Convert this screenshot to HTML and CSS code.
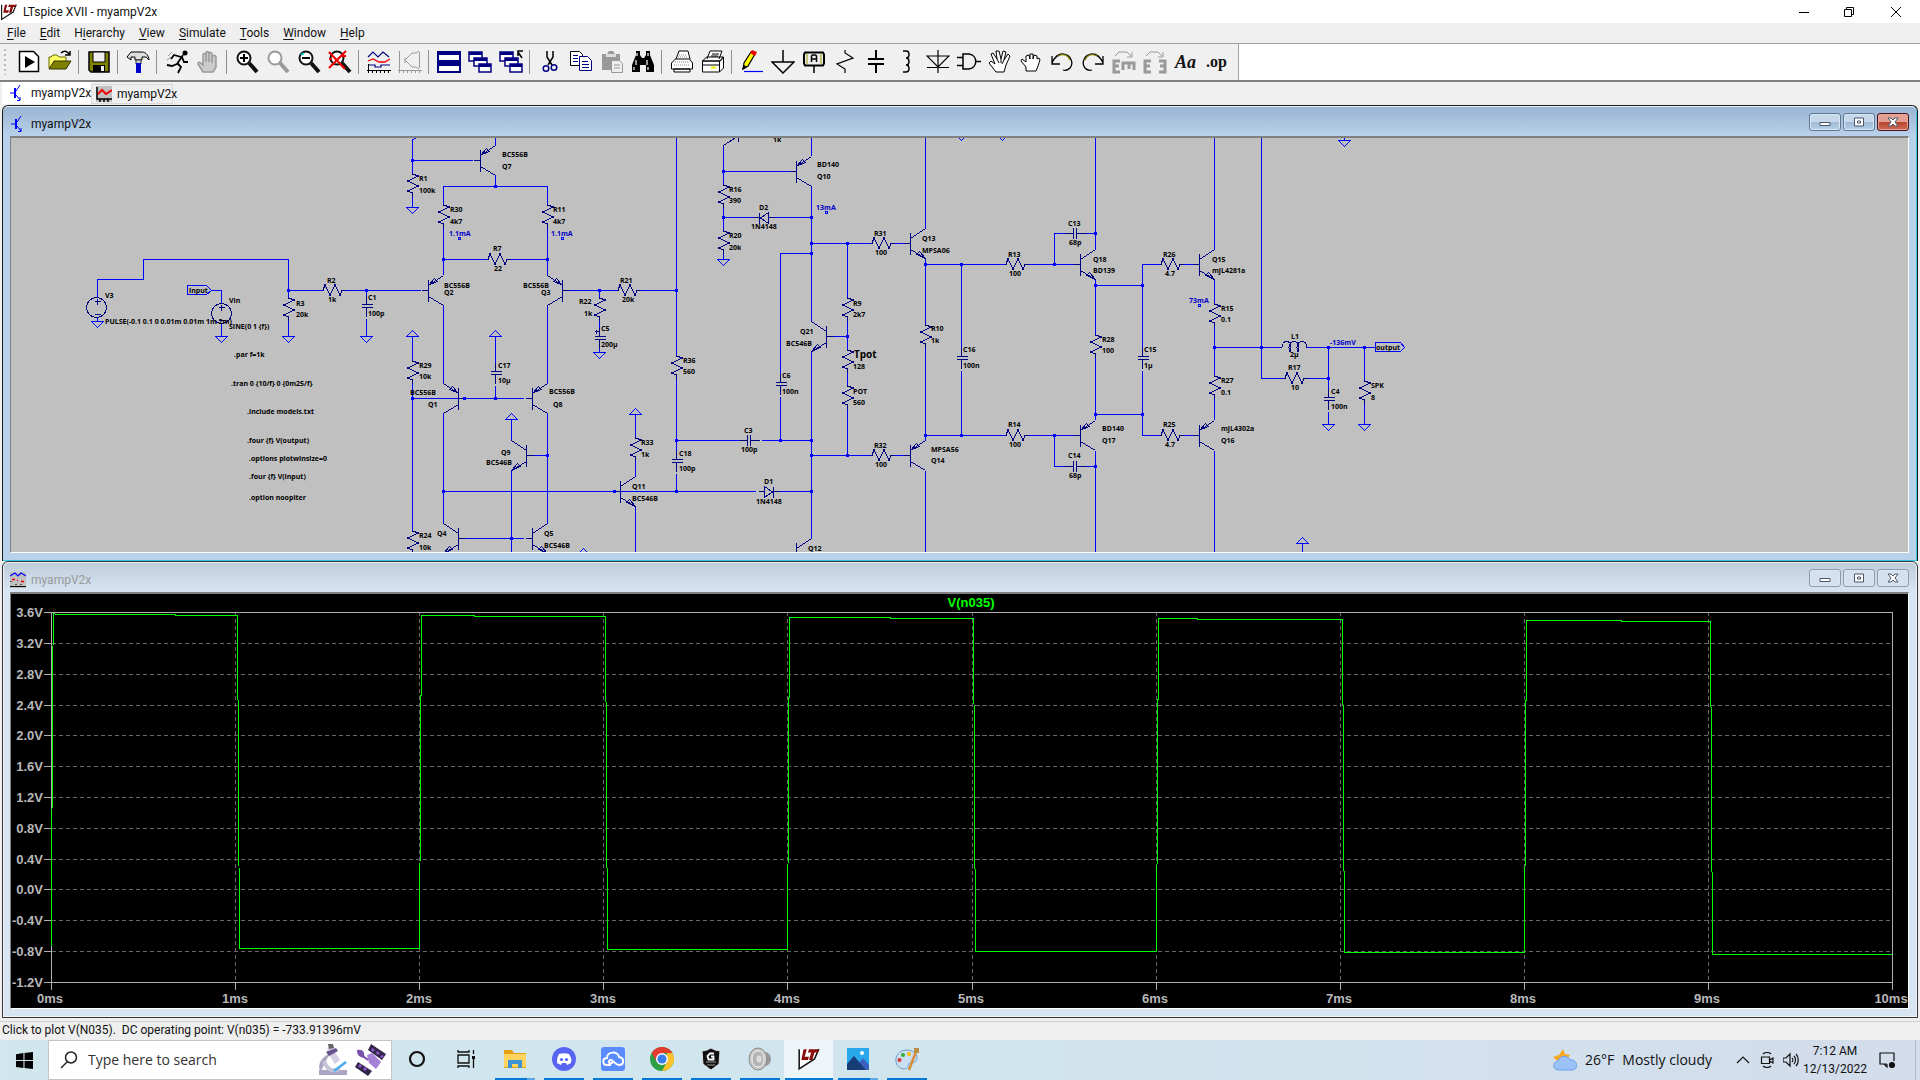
FILE: index.html
```html
<!DOCTYPE html>
<html lang="en">
<head>
<meta charset="utf-8">
<title>LTspice XVII - myampV2x</title>
<link rel="stylesheet" href="styles.css">
</head>
<body>
<svg class="defs" aria-hidden="true">
  <defs>
    <path id="res" class="part" d="M0 0v1l6 2l-11 5l11 5l-11 5l5 2v4"/>
    <path id="cap" class="part" d="M-5 0h11M-5 3h11M0 -9v9M0 3v9"/>
    <path id="dio" class="part" d="M-10 0h6M4 0h7M-4 -5v11l8 -5.500zM5 -5v11"/>
    <path id="pnp" class="part" d="M-7 0h7M0 -11v22M0 -5L15 -15M0 6L15 15M1 -6L6 -12L9 -9z"/>
    <path id="npn" class="part" d="M-7 0h7M0 -11v22M0 -5L15 -15M0 6L15 15M15 15L6 11L9 8z"/>
    <path id="gnd" class="wire" d="M-6 0h12l-6 6z"/>
    <path id="vcc" class="wire" d="M-6 0h12l-6 -6z"/>
    <path id="dot" class="dot" d="M-1.500 -1.500h3v3h-3z"/>
    <path id="probe" class="wire" d="M-1 -1h2v2h-2z"/>
    <g id="lt"><path d="M2 2v18l14-9L20 2" fill="#fff" stroke="#111" stroke-width="1.400"/><path d="M6 2h3L7 9h4l-1 3H4zM11 2h9l-1 3h-3l-2 7h-3l2-7h-3z" fill="#8b0a0a"/></g>
    <g id="tr" fill="none" stroke="#00f"><path d="M1 8h5M7 6l4-6M7 10l4 5M11 12v3.500H8"/><path d="M6 3v10" stroke-width="2"/></g>
    <g id="lens"><circle cx="9" cy="8" r="6.500" fill="#fff" stroke="currentColor" stroke-width="2"/><path d="M14 13l8 9" stroke="currentColor" stroke-width="4"/></g>
    <g id="casc" fill="#fff" stroke="#000080" stroke-width="1.500"><path d="M1 2h13v9H1z"/><path d="M1 3.500h13" stroke-width="3"/><path d="M6 8h13v8H6z"/><path d="M6 9.500h13" stroke-width="3"/><path d="M11 14h12v8H11z"/><path d="M11 15.500h12" stroke-width="3"/></g>
  </defs>
</svg>

<header class="titlebar">
  <svg class="app-icon" viewBox="0 0 22 22"><use href="#lt"/></svg>
  <h1 class="app-title">LTspice XVII - myampV2x</h1>
  <div class="caption-buttons">
    <button aria-label="Minimize"><svg viewBox="0 0 12 12"><path d="M1 6.500h10"/></svg></button>
    <button aria-label="Restore"><svg viewBox="0 0 12 12"><path d="M1.500 3.500h7v7h-7zM3.500 3.500v-2h7v7h-2"/></svg></button>
    <button aria-label="Close"><svg viewBox="0 0 12 12"><path d="M1 1l10 10M11 1L1 11"/></svg></button>
  </div>
</header>

<nav class="menubar">
  <button><u>F</u>ile</button><button><u>E</u>dit</button><button>H<u>i</u>erarchy</button><button><u>V</u>iew</button><button><u>S</u>imulate</button><button><u>T</u>ools</button><button><u>W</u>indow</button><button><u>H</u>elp</button>
</nav>

<div class="toolbar-row">
  <div class="toolbar">
    <button aria-label="New schematic"><svg viewBox="0 0 24 24"><path d="M2.500 1.500h14l5 5v15h-19z" fill="#fff" stroke="#000" stroke-width="1.500"/><path d="M8 6l10 6-10 6z"/></svg></button>
    <button aria-label="Open"><svg viewBox="0 0 24 24"><path d="M1 18V7h2l2-2h4l2 2h7v4" fill="#ffff66" stroke="#660"/><path d="M1 19L6 11h17l-5 8z" fill="#808000" stroke="#330"/><path d="M13 3c3-3 6-2 8 1m1-3v4h-5" fill="none" stroke="#000" stroke-width="1.500"/></svg></button>
    <span class="sep"></span>
    <button aria-label="Save"><svg viewBox="0 0 24 24"><path d="M2 2h20v20H4l-2-2z" fill="#808000" stroke="#000" stroke-width="1.500"/><path d="M6 2h12v10H6z" fill="#eee" stroke="#000"/><path d="M6 15h12v7H6z"/><path d="M14 16h3v5h-3z" fill="#eee"/></svg></button>
    <span class="sep"></span>
    <button aria-label="Control panel"><svg viewBox="0 0 24 24"><path d="M1 7l4-5h11c4 0 7 4 7 8l-3-3h-4v3H9V7H5v3z" fill="#ddd" stroke="#000"/><path d="M10 10h5v4h-5z" fill="#ccc" stroke="#333"/><path d="M10 13h5v10h-5z" fill="#00c"/></svg></button>
    <span class="sep"></span>
    <button aria-label="Run"><svg viewBox="0 0 24 24"><circle cx="20" cy="3" r="2.500"/><path d="M18 5l-6 9M16 7l-7-2-3 4M17 7l2 5h4M12 13l4 4-3 6M12 14l-5 2-5-1" fill="none" stroke="#000" stroke-width="1.800"/><path d="M3 6l4-4M2 10l4-3" stroke="#999"/></svg></button>
    <button aria-label="Halt"><svg viewBox="0 0 24 24"><path d="M7 22l-5-8c0-3 2-2 5 1V5c0-2 3-2 3 0V3c0-2 3-2 3 0v1c0-2 3-2 3 0v3c0-2 4-2 4 0v10l-3 5z" fill="#ccc" stroke="#999" stroke-width="1.500"/><path d="M10 5v7M13 4v8M16 7v6" stroke="#999" stroke-width="1.500"/></svg></button>
    <span class="sep"></span>
    <button aria-label="Zoom in"><svg viewBox="0 0 24 24"><use href="#lens"/><path d="M5 8h8M9 4v8" stroke="#000" stroke-width="2"/></svg></button>
    <button class="dim" aria-label="Pan"><svg viewBox="0 0 24 24"><use href="#lens"/></svg></button>
    <button aria-label="Zoom out"><svg viewBox="0 0 24 24"><use href="#lens"/><path d="M5 8h8" stroke="#000" stroke-width="2"/><path d="M4 5l3-2" stroke="#0cc" stroke-width="2"/></svg></button>
    <button aria-label="Zoom full extents"><svg viewBox="0 0 24 24"><use href="#lens"/><path d="M1 2l16 17M18 1L1 18M1 9h3M14 6h4" stroke="#e00" stroke-width="2.200"/></svg></button>
    <span class="sep"></span>
    <button aria-label="Autorange"><svg viewBox="0 0 24 24" fill="none"><path d="M1 7l5-5 5 5 5-5 6 5" stroke="#000080" stroke-width="1.200"/><path d="M1 11l5-2 6 3 6 0 5-3" stroke="#e00" stroke-width="1.300"/><path d="M1 15h7v2h6v-2h9" stroke="#000080" stroke-width="1.200"/><path d="M0 20.500h24M1.500 14v9M5.500 20v3M9.500 20v3M13.500 20v3M17.500 20v3M21.500 20v3" stroke="#000"/></svg></button>
    <button class="dim" aria-label="Toggle visibility"><svg viewBox="0 0 24 24" fill="none" stroke="#999"><path d="M1.500 1v22M0 20.500h24M5.500 20v3M9.500 20v3M13.500 20v3M17.500 20v3M21.500 20v3M21.500 2v16M7 10l7-7h4l3-2M7 10l7 7h4l3 2M7 8v5"/></svg></button>
    <span class="sep"></span>
    <button aria-label="Tile windows"><svg viewBox="0 0 24 24" fill="#fff" stroke="#000080" stroke-width="2"><path d="M1 2h22v9H1zM1 13h22v9H1z"/><path d="M1 3h22M1 14h22" stroke-width="4"/></svg></button>
    <button aria-label="Cascade windows"><svg viewBox="0 0 24 24"><use href="#casc"/></svg></button>
    <button aria-label="Close all windows"><svg viewBox="0 0 24 24"><use href="#casc"/><path d="M23 8l-4-6M19 6V1h5" fill="none" stroke="#000" stroke-width="1.500"/></svg></button>
    <span class="sep"></span>
    <button aria-label="Cut"><svg viewBox="0 0 24 24"><path d="M9 1v6l5 8M15 1v6l-5 8" fill="none" stroke="#000" stroke-width="1.500"/><g fill="none" stroke="#000080" stroke-width="1.500"><circle cx="8" cy="18.500" r="2.800"/><circle cx="16" cy="17.500" r="2.800"/></g></svg></button>
    <button aria-label="Copy"><svg viewBox="0 0 24 24" fill="#fff"><path d="M1.500 1.500h9l3 3v11h-12z" stroke="#000"/><path d="M10.500 6.500h8l4 4v10h-12z" stroke="#000080"/><path d="M4 5.500h5M4 8.500h5M4 11.500h5M13 11.500h6M13 14.500h7M13 17.500h7" stroke="#000080"/></svg></button>
    <button class="dim" aria-label="Paste"><svg viewBox="0 0 24 24"><path d="M2 4h5l2-3h4l2 3h5v16H2z" fill="#999"/><path d="M6 4h10v3H6z" fill="#ddd"/><path d="M11.500 10.500h8l3 3v9h-11z" fill="#eee" stroke="#999"/><path d="M14 15h6M14 18h6" stroke="#999"/></svg></button>
    <button aria-label="Find"><svg viewBox="0 0 24 24"><path d="M5 1h4v4l2 3h2l2-3V1h4v4l4 10v7h-8v-7H9v7H1v-7L5 5z"/><path d="M6 3v3M17 3v3M5 10v5M3 17v3M16 10v5M17 17v3" stroke="#fff" stroke-width="1.200"/></svg></button>
    <span class="sep"></span>
    <button aria-label="Print"><svg viewBox="0 0 24 24" fill="#fff" stroke="#000"><path d="M6 9l3-8h9l2 8M1.500 13l4-4h14l3 4v6h-21zM4 19h16v3H4z"/><path d="M9 5h8M8 7h9M5 12h14M4 15h16" stroke="#888" stroke-dasharray="1 1"/></svg></button>
    <button aria-label="Print setup"><svg viewBox="0 0 24 24" fill="#fff" stroke="#000"><path d="M6 9l3-8h12l-3 8M1.500 11l4-4h17l-3 4zM1.500 11h17v11h-17zM18.500 11l4-4v11l-4 4M2 15h16"/><path d="M11 4h7M10 6h7" /><path d="M10 17.500h5" stroke="#ee0" stroke-width="2"/></svg></button>
    <span class="sep"></span>
    <button aria-label="Draw wire"><svg viewBox="0 0 24 24"><path d="M3 19l1-6L11 2l4 2-7 12z" fill="#ff0" stroke="#000" stroke-width="1.200"/><path d="M10 3l2-3 5 2-2 4z" fill="#e00"/><path d="M2 20l2-5 3 2z"/><path d="M4 21.500h19" stroke="#00f" stroke-width="1.200"/></svg></button>
    <button aria-label="Ground"><svg viewBox="0 0 24 24" fill="none" stroke="#000" stroke-width="1.500"><path d="M12 0v12M1 12h22L12 23z"/></svg></button>
    <button aria-label="Label net"><svg viewBox="0 0 24 24"><path d="M3 2.500h18l1 2v9l-1 2H3l-1-2v-9z" fill="#eee" stroke="#000" stroke-width="2"/><path d="M5 4v10M19 4v10" stroke="#990"/><path d="M12 15v8M9.500 12V6l1-1h3l1 1v6M10 9h5" fill="none" stroke="#000" stroke-width="1.500"/></svg></button>
    <button aria-label="Resistor"><svg viewBox="0 0 24 24" fill="none" stroke="#000" stroke-width="1.200"><path d="M12 0v3l8 5L4 14l8 5v4"/></svg></button>
    <button aria-label="Capacitor"><svg viewBox="0 0 24 24" stroke="#000" stroke-width="2"><path d="M12 0v9M12 14v9M4 9h16M4 14h16" fill="none"/></svg></button>
    <button aria-label="Inductor"><svg viewBox="0 0 24 24" fill="none" stroke="#000" stroke-width="1.500"><path d="M8 1h3c4 0 4 7 0 7 4 0 4 7 0 7 4 0 4 7 0 7H8"/></svg></button>
    <button aria-label="Diode"><svg viewBox="0 0 24 24" fill="none" stroke="#000" stroke-width="1.200"><path d="M12 0v23M1 6h22L12 17zM1 17.500h22"/></svg></button>
    <button aria-label="Component"><svg viewBox="0 0 24 24" fill="none" stroke="#000" stroke-width="1.500"><path d="M6 4h6c9 1 9 14 0 15H6zM0 7.500h6M0 15.500h6M18 11.500h6"/></svg></button>
    <button aria-label="Move"><svg viewBox="0 0 24 24" fill="#fff" stroke="#000"><path d="M8 22l-7-9 2-2 4 3-4-10 2-1 4 6-1-8h3l2 8 2-8 3 1-2 8 4-6 2 2-4 9-2 7z"/><path d="M9 9l2 4M13 9v4M16 10l-2 4"/></svg></button>
    <button aria-label="Drag"><svg viewBox="0 0 24 24" fill="#fff" stroke="#000"><path d="M7 21v-4l-5-6 1-2 4 3V6l3-1 1 4V4h3v5l1-4 3 1v3l2-1 1 2-2 6-2 5z"/></svg></button>
    <button aria-label="Undo"><svg viewBox="0 0 24 24" fill="none" stroke="#000" stroke-width="1.300"><path d="M2 6v8h8M2 13C5 6 9 4 13 4c8 1 11 9 7 14-2 2-4 3-7 2"/><path d="M8 6c5-3 10-1 12 4" stroke="#880"/></svg></button>
    <button aria-label="Redo"><svg viewBox="0 0 24 24" fill="none" stroke="#000" stroke-width="1.300"><path d="M22 6v8h-8M22 13C19 6 15 4 11 4c-8 1-11 9-7 14 2 2 4 3 7 2"/><path d="M16 6c-5-3-10-1-12 4" stroke="#880"/></svg></button>
    <button class="dim" aria-label="Rotate"><svg viewBox="0 0 24 24" fill="none" stroke="#999"><path d="M3 6l4-4h8l4 4M20 2v5h-5"/><path d="M8 11H2v11h6M2 16h5M11 20v-7h11v7M17 13v6" stroke-width="3"/></svg></button>
    <button class="dim" aria-label="Mirror"><svg viewBox="0 0 24 24" fill="none" stroke="#999"><path d="M3 6l4-4h8l4 4M20 2v5h-5"/><path d="M8 11H2v11h6M2 16h5M16 11h6v11h-6M22 16h-5" stroke-width="3"/></svg></button>
    <button class="aa" aria-label="Text">Aa</button>
    <button class="op" aria-label="SPICE directive">.op</button>
  </div>
</div>

<div class="tabs">
  <button class="tab tab-active"><svg viewBox="0 0 16 16"><use href="#tr"/></svg>myampV2x</button>
  <button class="tab"><svg viewBox="0 0 16 16"><path d="M0 0h16v16H0z" fill="#c0c0c0"/><path d="M1 1v12h15M4 13v3M8 13v3M12 13v3" fill="none" stroke="#000" stroke-width="1.500"/><path d="M2 8l4-4 4 4 6-4" fill="none" stroke="#e00" stroke-width="2"/></svg>myampV2x</button>
</div>

<main class="workspace">
  <section class="window window-active">
    <div class="window-title">
      <svg class="window-icon" viewBox="0 0 16 16"><use href="#tr"/></svg>
      <h2>myampV2x</h2>
      <div class="window-buttons">
        <button aria-label="Minimize"><svg viewBox="0 0 12 10"><path d="M1 5.500h10v3H1z"/></svg></button>
        <button aria-label="Maximize"><svg viewBox="0 0 12 10"><path d="M1.500 1h9v8h-9zM4.500 4h3v2h-3z"/></svg></button>
        <button class="close" aria-label="Close"><svg viewBox="0 0 12 10"><path d="M1 1h3l2 2 2-2h3L8 5l3 4H8L6 7 4 9H1l3-4z"/></svg></button>
      </div>
    </div>
    <svg class="canvas schematic" viewBox="11 138 1897 414" role="img" aria-label="Amplifier schematic">
      <path class="wire" d="M97.500 297.500V279.500H143.500V259.500H288.500V297.500M97.500 317v4M288.500 320v16.500M211.500 290.500h10v13M221.500 323v13.500
        M288.500 290.500h33.500M345 290.500H421M366.500 290.500v6M366.500 319v17.500M412.500 140V173.500M412.500 140l3-2M412.500 160.500H473M412.500 197v10.500
        M443.500 204V186.500H547.500V204M443.500 228V275M547.500 228V275M495.500 138v7.500M495.500 175v11M443.500 259.500H487M511 259.500h36.500
        M569 290.500H617M641 290.500h35.500M599.500 290.500v7M599.500 321v7M599.500 346v6.500M676.500 138V355M676.500 379V451M676.500 474v17.500
        M443.500 305V384M547.500 305V384M443.500 413V524M547.500 413V524M412.500 398.500H524M412.500 336.500V360M412.500 384V530M495.500 336.500V363M495.500 386v12
        M511.500 419.500v21.500M511.500 471V552M533 455.500h14.500M466 538.500H524M443.500 491.500H756M776 491.500h35.500M635.500 414.500v23M635.500 461v16M635.500 507V552
        M676.500 440.500H739M762 440.500h49.500M780.500 440.500V397M780.500 374V253.500H811.500M723.500 145.500V184M723.500 171.500H790M723.500 208v22M723.500 254v5
        M723.500 217.500H754M775 217.500h36.500M811.500 138v18M811.500 186V321.500M811.500 352V538.500M811.500 243.500H871M895 243.500h9M847.500 243.500V297M847.500 321v28M847.500 373v12M847.500 409v46.500M833 336.500h14.500
        M811.500 455.500H871M895 455.500h9M925.500 138V228.500M925.500 259V324M925.500 348v92.500M925.500 471V552M925.500 264.500H1005M1029 264.500h45M925.500 435.500H1005M1029 435.500h45
        M961.500 264.500V348M961.500 371v64.500M1054.500 264.500V233.500H1065M1085 233.500h10.500M1095.500 138V249.500M1095.500 280V334M1095.500 358V420M1095.500 451V552M1054.500 435.500V466.500H1065M1085 466.500h10.500
        M1095.500 285.500h47M1095.500 414.500h47M1160 264.500H1142.500V348M1142.500 371V435.500H1160M1184 264.500h9M1184 435.500h9M1214.500 138V249.500M1214.500 280v23M1214.500 327v48M1214.500 399v21M1214.500 451V552
        M1214.500 347.500H1282M1261.500 138V378.500H1284M1307 347.500H1375.500M1308 378.500h20.500M1328.500 347.500V389M1328.500 412v12.500M1364.500 347.500V380M1364.500 404v20.500M1344.500 138v2.500M1302.500 543.500V552"/>
      <path class="wire" d="M187.500 285.500h19l5 5l-5 4h-19zM1375.500 342.500h25l4 5l-4 4h-25z"/>
      <g class="part"><circle cx="96.500" cy="307.500" r="10"/><circle cx="221.500" cy="313.500" r="10"/><path d="M94.500 301.500h6M97.500 298.500v6M94.500 314.500h6M218.500 307.500h6M221.500 304.500v6M218.500 320.500h6M738.500 138v4M723.500 145.500L735 138M595 331.500h4M596.500 330v4M1282 347.500c0-8 9-8 9 0c0 5-2 5-2 0c0-8 10-8 10 0c0 5-2 5-2 0c0-8 10-8 10 0"/></g>
      <use href="#res" x="412.500" y="173"/><use href="#res" x="288.500" y="297"/><use href="#res" x="443.500" y="204"/><use href="#res" x="547.500" y="204"/><use href="#res" x="599.500" y="297"/><use href="#res" x="676.500" y="355"/><use href="#res" x="412.500" y="360"/><use href="#res" x="412.500" y="530"/><use href="#res" x="635.500" y="437"/><use href="#res" x="723.500" y="184"/><use href="#res" x="723.500" y="230"/><use href="#res" x="847.500" y="297"/><use href="#res" x="847.500" y="349"/><use href="#res" x="847.500" y="385"/><use href="#res" x="925.500" y="324"/><use href="#res" x="1095.500" y="334"/><use href="#res" x="1214.500" y="303"/><use href="#res" x="1214.500" y="375"/><use href="#res" x="1364.500" y="380"/>
      <use href="#res" transform="translate(322 290.500) rotate(-90)"/><use href="#res" transform="translate(487 259.500) rotate(-90)"/><use href="#res" transform="translate(617 290.500) rotate(-90)"/><use href="#res" transform="translate(871 243.500) rotate(-90)"/><use href="#res" transform="translate(871 455.500) rotate(-90)"/><use href="#res" transform="translate(1005 264.500) rotate(-90)"/><use href="#res" transform="translate(1005 435.500) rotate(-90)"/><use href="#res" transform="translate(1160 264.500) rotate(-90)"/><use href="#res" transform="translate(1160 435.500) rotate(-90)"/><use href="#res" transform="translate(1284 378.500) rotate(-90)"/>
      <use href="#cap" x="366.500" y="304.500"/><use href="#cap" x="495.500" y="371.500"/><use href="#cap" x="599.500" y="336.500"/><use href="#cap" x="676.500" y="459.500"/><use href="#cap" x="780.500" y="382.500"/><use href="#cap" x="961.500" y="356.500"/><use href="#cap" x="1142.500" y="356.500"/><use href="#cap" x="1328.500" y="397.500"/>
      <use href="#cap" transform="translate(747.500 440.500) rotate(-90)"/><use href="#cap" transform="translate(1073.500 233.500) rotate(-90)"/><use href="#cap" transform="translate(1073.500 466.500) rotate(-90)"/>
      <use href="#dio" x="768.500" y="491.500"/><use href="#dio" transform="translate(764.500 217.500) scale(-1 1)"/>
      <use href="#pnp" x="428.500" y="290.500"/><use href="#pnp" x="480.500" y="160.500"/><use href="#pnp" x="532.500" y="398.500"/><use href="#pnp" x="796.500" y="171.500"/><use href="#pnp" x="910.500" y="455.500"/><use href="#pnp" x="1080.500" y="435.500"/><use href="#pnp" x="1199.500" y="435.500"/>
      <use href="#pnp" transform="translate(562.500 290.500) scale(-1 1)"/><use href="#pnp" transform="translate(458.500 398.500) scale(-1 1)"/>
      <use href="#npn" x="620.500" y="491.500"/><use href="#npn" x="910.500" y="243.500"/><use href="#npn" x="1080.500" y="264.500"/><use href="#npn" x="1199.500" y="264.500"/><use href="#npn" x="532.500" y="538.500"/><use href="#npn" x="796.500" y="553.500"/>
      <use href="#npn" transform="translate(526.500 455.500) scale(-1 1)"/><use href="#npn" transform="translate(458.500 538.500) scale(-1 1)"/><use href="#npn" transform="translate(826.500 336.500) scale(-1 1)"/>
      <use href="#gnd" x="97.500" y="321.500"/><use href="#gnd" x="221.500" y="336.500"/><use href="#gnd" x="288.500" y="336.500"/><use href="#gnd" x="366.500" y="336.500"/><use href="#gnd" x="412.500" y="207.500"/><use href="#gnd" x="599.500" y="352.500"/><use href="#gnd" x="723.500" y="259.500"/><use href="#gnd" x="1328.500" y="424.500"/><use href="#gnd" x="1364.500" y="424.500"/><use href="#gnd" x="1344.500" y="140.500"/><use href="#gnd" x="961.500" y="134.500"/><use href="#gnd" x="1002.500" y="134.500"/>
      <use href="#vcc" x="412.500" y="336.500"/><use href="#vcc" x="495.500" y="336.500"/><use href="#vcc" x="511.500" y="419.500"/><use href="#vcc" x="635.500" y="414.500"/><use href="#vcc" x="1302.500" y="543.500"/><use href="#vcc" x="583.500" y="554.500"/>
      <use href="#probe" x="459.500" y="238.500"/><use href="#probe" x="562.500" y="238.500"/><use href="#probe" x="826.500" y="212.500"/><use href="#probe" x="1199.500" y="305.500"/>
      <use href="#dot" x="288.500" y="290.500"/><use href="#dot" x="366.500" y="290.500"/><use href="#dot" x="412.500" y="160.500"/><use href="#dot" x="443.500" y="259.500"/><use href="#dot" x="547.500" y="259.500"/><use href="#dot" x="495.500" y="186.500"/><use href="#dot" x="599.500" y="290.500"/><use href="#dot" x="676.500" y="290.500"/><use href="#dot" x="412.500" y="398.500"/><use href="#dot" x="464.500" y="398.500"/><use href="#dot" x="495.500" y="398.500"/><use href="#dot" x="547.500" y="455.500"/><use href="#dot" x="443.500" y="491.500"/><use href="#dot" x="614.500" y="491.500"/><use href="#dot" x="676.500" y="491.500"/><use href="#dot" x="811.500" y="491.500"/><use href="#dot" x="511.500" y="538.500"/><use href="#dot" x="676.500" y="440.500"/><use href="#dot" x="780.500" y="440.500"/><use href="#dot" x="811.500" y="440.500"/><use href="#dot" x="811.500" y="455.500"/><use href="#dot" x="847.500" y="455.500"/><use href="#dot" x="723.500" y="171.500"/><use href="#dot" x="723.500" y="217.500"/><use href="#dot" x="811.500" y="217.500"/><use href="#dot" x="811.500" y="243.500"/><use href="#dot" x="811.500" y="253.500"/><use href="#dot" x="847.500" y="243.500"/><use href="#dot" x="847.500" y="336.500"/><use href="#dot" x="925.500" y="264.500"/><use href="#dot" x="961.500" y="264.500"/><use href="#dot" x="925.500" y="435.500"/><use href="#dot" x="961.500" y="435.500"/><use href="#dot" x="1054.500" y="264.500"/><use href="#dot" x="1054.500" y="435.500"/><use href="#dot" x="1095.500" y="233.500"/><use href="#dot" x="1095.500" y="466.500"/><use href="#dot" x="1095.500" y="285.500"/><use href="#dot" x="1095.500" y="414.500"/><use href="#dot" x="1142.500" y="285.500"/><use href="#dot" x="1142.500" y="414.500"/><use href="#dot" x="1214.500" y="347.500"/><use href="#dot" x="1261.500" y="347.500"/><use href="#dot" x="1328.500" y="347.500"/><use href="#dot" x="1364.500" y="347.500"/><use href="#dot" x="1328.500" y="378.500"/>
      <g class="labels">
        <text x="105" y="298">V3</text><text x="105" y="324">PULSE(-0.1 0.1 0 0.01m 0.01m 1m 2m)</text><text x="229" y="303">Vin</text><text x="229" y="329">SINE(0 1 {f})</text><text x="189" y="293">input</text>
        <text x="234" y="357">.par f=1k</text><text x="231" y="386">.tran 0 {10/f} 0 {0m25/f}</text><text x="247" y="414">.include models.txt</text><text x="247" y="443">.four {f} V(output)</text><text x="249" y="461">.options plotwinsize=0</text><text x="249" y="479">.four {f} V(input)</text><text x="249" y="500">.option noopiter</text>
        <text x="296" y="306">R3</text><text x="296" y="317">20k</text><text x="327" y="283">R2</text><text x="328" y="302">1k</text><text x="368" y="300">C1</text><text x="368" y="316">100p</text><text x="419" y="181">R1</text><text x="419" y="193">100k</text>
        <text x="450" y="212">R30</text><text x="450" y="224">4k7</text><text x="444" y="288">BC556B</text><text x="444" y="295">Q2</text><text x="419" y="368">R29</text><text x="419" y="379">10k</text><text x="410" y="395">BC556B</text><text x="428" y="407">Q1</text><text x="419" y="538">R24</text><text x="419" y="550">10k</text><text x="437" y="536">Q4</text>
        <text x="502" y="157">BC556B</text><text x="502" y="169">Q7</text><text x="553" y="212">R11</text><text x="553" y="224">4k7</text><text x="493" y="251">R7</text><text x="494" y="271">22</text><text x="523" y="288">BC556B</text><text x="541" y="295">Q3</text><text x="620" y="283">R21</text><text x="622" y="302">20k</text><text x="579" y="304">R22</text><text x="584" y="316">1k</text><text x="601" y="331">C5</text><text x="601" y="347">200µ</text>
        <text x="498" y="368">C17</text><text x="498" y="383">10µ</text><text x="549" y="394">BC556B</text><text x="553" y="407">Q8</text><text x="501" y="455">Q9</text><text x="486" y="465">BC546B</text><text x="641" y="445">R33</text><text x="641" y="457">1k</text><text x="632" y="489">Q11</text><text x="632" y="501">BC546B</text><text x="544" y="536">Q5</text><text x="544" y="548">BC546B</text>
        <text x="683" y="363">R36</text><text x="683" y="374">560</text><text x="679" y="456">C18</text><text x="679" y="471">100p</text><text x="744" y="433">C3</text><text x="741" y="452">100p</text><text x="782" y="378">C6</text><text x="782" y="394">100n</text><text x="764" y="484">D1</text><text x="756" y="504">1N4148</text><text x="759" y="210">D2</text><text x="751" y="229">1N4148</text><text x="729" y="192">R16</text><text x="729" y="203">390</text><text x="729" y="238">R20</text><text x="729" y="250">20k</text><text x="773" y="142">1k</text><text x="800" y="334">Q21</text><text x="786" y="346">BC546B</text>
        <text x="817" y="167">BD140</text><text x="817" y="179">Q10</text><text x="874" y="236">R31</text><text x="875" y="255">100</text><text x="922" y="241">Q13</text><text x="922" y="253">MPSA06</text><text x="853" y="306">R9</text><text x="853" y="317">2k7</text><text class="big" x="854" y="358">Tpot</text><text x="853" y="369">128</text><text x="853" y="394">POT</text><text x="853" y="405">560</text><text x="931" y="331">R10</text><text x="931" y="343">1k</text><text x="963" y="352">C16</text><text x="963" y="368">100n</text><text x="874" y="448">R32</text><text x="875" y="467">100</text><text x="931" y="452">MPSA56</text><text x="931" y="463">Q14</text><text x="808" y="551">Q12</text>
        <text x="1008" y="257">R13</text><text x="1009" y="276">100</text><text x="1008" y="427">R14</text><text x="1009" y="447">100</text><text x="1068" y="226">C13</text><text x="1069" y="245">68p</text><text x="1093" y="262">Q18</text><text x="1093" y="273">BD139</text><text x="1068" y="458">C14</text><text x="1069" y="478">68p</text><text x="1102" y="342">R28</text><text x="1102" y="353">100</text><text x="1144" y="352">C15</text><text x="1144" y="368">1µ</text><text x="1102" y="431">BD140</text><text x="1102" y="443">Q17</text>
        <text x="1163" y="257">R26</text><text x="1165" y="276">4.7</text><text x="1163" y="427">R25</text><text x="1165" y="447">4.7</text><text x="1212" y="262">Q15</text><text x="1212" y="273">mjL4281a</text><text x="1221" y="311">R15</text><text x="1221" y="322">0.1</text><text x="1221" y="383">R27</text><text x="1221" y="395">0.1</text><text x="1221" y="431">mjL4302a</text><text x="1221" y="443">Q16</text><text x="1291" y="339">L1</text><text x="1290" y="357">2µ</text><text x="1288" y="370">R17</text><text x="1291" y="390">10</text><text x="1331" y="394">C4</text><text x="1331" y="409">100n</text><text x="1371" y="388">SPK</text><text x="1371" y="400">8</text><text x="1376" y="350">output</text>
        <g class="probes"><text x="449" y="236">1.1mA</text><text x="551" y="236">1.1mA</text><text x="816" y="210">13mA</text><text x="1189" y="303">73mA</text><text x="1330" y="345">-136mV</text></g>
      </g>
    </svg>
  </section>

  <section class="window window-plot">
    <div class="window-title">
      <svg class="window-icon" viewBox="0 0 16 16"><path d="M0 0h16v16H0z" fill="#c0c0c0"/><path d="M0 4l5-3 3 3 3-3 5 3" fill="none" stroke="#00f" stroke-width="1.200"/><path d="M2 7.500h3M7 8.500h1M11 9.500h3" stroke="#e00" stroke-width="1.500"/><path d="M0 14.500h16M1 9v1M6 12v1M11 12v1" stroke="#000" stroke-width="1.200"/></svg>
      <h2>myampV2x</h2>
      <div class="window-buttons">
        <button aria-label="Minimize"><svg viewBox="0 0 12 10"><path d="M1 5.500h10v3H1z"/></svg></button>
        <button aria-label="Maximize"><svg viewBox="0 0 12 10"><path d="M1.500 1h9v8h-9zM4.500 4h3v2h-3z"/></svg></button>
        <button aria-label="Close"><svg viewBox="0 0 12 10"><path d="M1 1h3l2 2 2-2h3L8 5l3 4H8L6 7 4 9H1l3-4z"/></svg></button>
      </div>
    </div>
    <svg class="canvas plot" viewBox="11 595 1897 414" role="img" aria-label="Waveform plot of V(n035)">
      <path class="grid" d="M51.500 644.500H1892M51.500 675.500H1892M51.500 706.500H1892M51.500 736.500H1892M51.500 767.500H1892M51.500 798.500H1892M51.500 829.500H1892M51.500 860.500H1892M51.500 890.500H1892M51.500 921.500H1892M51.500 952.500H1892M235.500 613V983M419.500 613V983M603.500 613V983M787.500 613V983M972.500 613V983M1156.500 613V983M1340.500 613V983M1524.500 613V983M1708.500 613V983"/>
      <path class="axis" d="M51.500 613.500H1892.500V983.500H51.500zM44 613.500h8M44 644.500h8M44 675.500h8M44 706.500h8M44 736.500h8M44 767.500h8M44 798.500h8M44 829.500h8M44 860.500h8M44 890.500h8M44 921.500h8M44 952.500h8M44 983.500h8M51.500 983v8M235.500 983v8M419.500 983v8M603.500 983v8M787.500 983v8M972.500 983v8M1156.500 983v8M1340.500 983v8M1524.500 983v8M1708.500 983v8M1892.500 983v8"/>
      <path class="trace" d="M51.500 947L52.500 680L53.500 614.500L57 615.500H175L176 616.500H237.500L239.500 949.500H419.500L421.500 616.500H474L475 617.500H605.500L607.500 950.500H787.500L789.500 618.500H890L891 619.500H973.500L975.500 952.500H1156.500L1158.500 619.500H1197L1198 620.500H1342.500L1344.500 953.500H1524.500L1526.500 621.500H1621L1622 622.500H1710.500L1712.500 955.500H1892"/>
      <g class="ticks ticks-y"><text x="43" y="618">3.6V</text><text x="43" y="649">3.2V</text><text x="43" y="680">2.8V</text><text x="43" y="711">2.4V</text><text x="43" y="741">2.0V</text><text x="43" y="772">1.6V</text><text x="43" y="803">1.2V</text><text x="43" y="834">0.8V</text><text x="43" y="865">0.4V</text><text x="43" y="895">0.0V</text><text x="43" y="926">-0.4V</text><text x="43" y="957">-0.8V</text><text x="43" y="988">-1.2V</text></g>
      <g class="ticks ticks-x"><text x="50" y="1004">0ms</text><text x="235" y="1004">1ms</text><text x="419" y="1004">2ms</text><text x="603" y="1004">3ms</text><text x="787" y="1004">4ms</text><text x="971" y="1004">5ms</text><text x="1155" y="1004">6ms</text><text x="1339" y="1004">7ms</text><text x="1523" y="1004">8ms</text><text x="1707" y="1004">9ms</text><text x="1891" y="1004">10ms</text><text class="trace-name" x="971" y="608">V(n035)</text></g>
    </svg>
  </section>
</main>

<footer class="statusbar">Click to plot V(N035).&nbsp; DC operating point: V(n035) = -733.91396mV</footer>

<div class="taskbar">
  <button class="start" aria-label="Start"><svg viewBox="0 0 16 16"><path d="M0 2l7-1v6.500H0zM8 1l8-1v7.500H8zM0 8.500h7V15l-7-1zM8 8.500h8V16l-8-1z"/></svg></button>
  <label class="search">
    <svg class="search-icon" viewBox="0 0 18 18"><circle cx="11" cy="6.500" r="5.500"/><path d="M7 11l-6 6"/></svg>
    <input type="text" aria-label="Search" placeholder="Type here to search">
    <svg class="art" viewBox="0 0 32 32"><path d="M5 27c-3-8 3-14 8-16M4 30h26v-3H4z" fill="#aaa5c0" stroke="#aaa5c0" stroke-width="2"/><path d="M8 17c3 9 9 11 16 8" fill="none" stroke="#c7c3d8" stroke-width="4"/><path d="M12 3l5-1 3 4-1 2 5 8-5 4-8-12z" fill="#d4cfe4"/><path d="M12 0h5l1 4-5 1z" fill="#666"/><path d="M10 8l10-4 2 3-9 5z" fill="#66538d"/><path d="M18 27l12-9" stroke="#48aaf0" stroke-width="2.500"/></svg>
    <svg class="art" viewBox="0 0 32 32"><path d="M16 0l15 10-4 6L13 6zM3 18l14 9-4 5L0 23z" fill="#33264a"/><path d="M17 4l3 2-2 2-2-2zM22 7l3 2-2 2-2-2zM27 11l2 1-2 2-2-1zM5 20l2 2-2 2-2-2zM10 23l2 2-2 2-2-2z" fill="#8d58cf"/><path d="M12 11l5-2 9 9-5 7-7-6z" fill="#a682d6"/><path d="M2 6c6-1 8 2 7 8-5-1-7-3-7-8z" fill="#7851a9"/><path d="M8 12l5 4" stroke="#7851a9" stroke-width="2"/></svg>
  </label>
  <div class="apps">
    <button aria-label="Cortana"><svg viewBox="0 0 24 24"><circle cx="12" cy="12" r="7" fill="none" stroke="#111" stroke-width="2.200"/></svg></button>
    <button aria-label="Task view"><svg viewBox="0 0 24 24" fill="none" stroke="#111" stroke-width="1.300"><path d="M4 8h11v8H4zM4 3v2h11V3M4 21v-2h11v2M19.500 3v4M19.500 12v9"/><path d="M18 9h3v3h-3z" fill="#111" stroke="none"/></svg></button>
    <button class="running split" aria-label="File Explorer"><svg viewBox="0 0 24 24"><path d="M1 3h8l2 3h12v15H1z" fill="#e5a00d"/><path d="M1 7h22v13H1z" fill="#ffd45e"/><path d="M5 21v-8h14v8h-4v-4H9v4z" fill="#3f94d8"/></svg></button>
    <button class="running" aria-label="Discord"><svg viewBox="0 0 24 24"><circle cx="12" cy="12" r="12" fill="#5865f2"/><path d="M7 7c3-1 7-1 10 0 2 3 3 6 2 9l-4 2-1-2h-4l-1 2-4-2c0-3 0-6 2-9z" fill="#fff"/><circle cx="9.500" cy="12.500" r="1.600" fill="#5865f2"/><circle cx="14.500" cy="12.500" r="1.600" fill="#5865f2"/></svg></button>
    <button class="running" aria-label="Cloud"><svg viewBox="0 0 24 24"><rect width="24" height="24" rx="3" fill="#5a8cff"/><path d="M10 18H6c-5 0-5-7 0-7 0-7 11-7 12-1 6 1 5 8 0 8-4 0-6-6-9-5-3 2 0 5 3 2" fill="none" stroke="#fff" stroke-width="2"/></svg></button>
    <button class="running" aria-label="Chrome"><svg viewBox="0 0 24 24"><circle cx="12" cy="12" r="12" fill="#2c9f45"/><path d="M1.600 6A12 12 0 0 1 22.400 6H12l-5 9z" fill="#e33b2e"/><path d="M22.400 6A12 12 0 0 1 12 24l5-9V6z" fill="#fdc12b"/><circle cx="12" cy="12" r="6" fill="#fff"/><circle cx="12" cy="12" r="4.600" fill="#3b7ded"/></svg></button>
    <button class="running" aria-label="Game client"><svg viewBox="0 0 24 24"><path d="M3 4l5-1 4-2 4 2 5 1-1 13-8 6-8-6z" fill="#111" stroke="#ddd"/><path d="M15 6.500h-4L8.500 9l1 3.500h5V9.500H12" fill="none" stroke="#fff" stroke-width="1.800"/><path d="M7 15h10M8 18h8" stroke="#a99"/></svg></button>
    <button class="running" aria-label="Speaker"><svg viewBox="0 0 24 24"><ellipse cx="17" cy="12" rx="6" ry="7" fill="#999"/><ellipse cx="10" cy="12" rx="9" ry="11" fill="#c8c8c8" stroke="#888"/><ellipse cx="10" cy="12" rx="6" ry="8" fill="#b4b4b4" stroke="#eee"/><ellipse cx="11" cy="12" rx="2.500" ry="3.500" fill="#ddd"/></svg></button>
    <button class="running current" aria-label="LTspice"><svg viewBox="0 0 22 22"><use href="#lt"/></svg></button>
    <button class="running split" aria-label="Photos"><svg viewBox="0 0 24 24"><path d="M1 1h22v22H1z" fill="#28a8ea"/><path d="M12 17l5-6 6 7v5H12z" fill="#3c60c0"/><path d="M1 17l7-8 12 14H1z" fill="#173d78"/><circle cx="16" cy="6" r="2" fill="#fff"/></svg></button>
    <button class="running" aria-label="Paint"><svg viewBox="0 0 24 24"><path d="M12 3C4 3 0 9 1 15c1 7 9 8 11 6 2-1 0-4 3-5 5 0 7-2 7-5 0-5-5-8-10-8z" fill="#c9dff2" stroke="#6b9cc4"/><circle cx="4.500" cy="13" r="2" fill="#d33"/><circle cx="8" cy="8" r="2" fill="#3a3"/><circle cx="14" cy="7" r="2" fill="#fb0"/><path d="M22 2L14 23" stroke="#d88b38" stroke-width="2.500"/><path d="M19 1h5v5h-5z" fill="#b98d42"/></svg></button>
  </div>
  <div class="tray">
    <button class="weather"><svg viewBox="0 0 24 22"><path d="M10 0l2 5 5 1-3 5H3L0 8l6-2z" fill="#f6a821"/><path d="M6 21c-7 0-7-8-1-9 2-6 10-6 12-1 8-1 9 10 2 10z" fill="#9bc2f6" stroke="#6b9eea"/></svg><span>26°F</span><span>Mostly cloudy</span></button>
    <button aria-label="Show hidden icons"><svg class="glyph" viewBox="0 0 16 16"><path d="M2 11l6-6 6 6"/></svg></button>
    <button aria-label="Meet now"><svg class="glyph" viewBox="0 0 16 16"><path d="M2.500 5h8v6.500h-8zM10.500 8l3.500-2v5l-3.500-2M4 2c2-2 6-2 8 0M4 14c2 2 6 2 8 0"/></svg></button>
    <button aria-label="Volume"><svg class="glyph" viewBox="0 0 16 16"><path d="M0 6h3l4-4v12l-4-4H0zM9 6c1 1 1 3 0 4M11 4c2 2 2 6 0 8M13 2c3 3 3 9 0 12"/></svg></button>
    <button class="clock"><span>7:12 AM</span><span>12/13/2022</span></button>
    <button class="notify" aria-label="Notifications"><svg class="glyph" viewBox="0 0 16 16"><path d="M8 12H5v0H1V1h14v8M5 12l3 3v-3"/><circle cx="13" cy="13" r="2.500" fill="#111"/></svg></button>
  </div>
</div>
</body>
</html>
```
FILE: styles.css
```css
* { box-sizing: border-box; }

body {
  margin: 0;
  min-height: 100vh;
  display: flex;
  flex-direction: column;
  background: #efefef;
  color: #111;
  font: 12px/16px Roboto, "Noto Sans", sans-serif;
}

button {
  padding: 0;
  border: 0;
  background: none;
  color: inherit;
  font: inherit;
}

svg { display: block; flex: none; }
.defs { position: absolute; width: 0; height: 0; }

/* Application frame */
.titlebar {
  display: flex;
  align-items: center;
  height: 23px;
  background: #fff;
}
.app-icon { width: 18px; height: 18px; margin-right: 5px; }
.app-title { margin: 0; font-size: 12px; font-weight: 400; }
.caption-buttons { display: flex; margin-left: auto; }
.caption-buttons button {
  display: flex;
  justify-content: center;
  width: 45px;
}
.caption-buttons button:last-child { width: 49px; }
.caption-buttons svg { width: 12px; height: 12px; fill: none; stroke: #000; }

.menubar {
  display: flex;
  gap: 14px;
  height: 21px;
  padding-left: 7px;
  border-bottom: 1px solid #a0a0a0;
}
.menubar u { text-underline-offset: 2px; }

.toolbar-row {
  display: flex;
  height: 38px;
  background: #fff;
  border-bottom: 2px solid #808080;
}
.toolbar {
  display: flex;
  align-items: center;
  padding: 0 6px 0 4px;
  background: #f0f0f0;
  border-right: 1px solid #a0a0a0;
}
.toolbar::before {
  content: "";
  width: 2px;
  height: 26px;
  margin-right: 7px;
  background: repeating-linear-gradient(#bbb 0 2px, transparent 2px 5px);
}
.toolbar button {
  display: flex;
  justify-content: center;
  align-items: center;
  width: 31px;
  height: 30px;
}
.toolbar svg { width: 24px; height: 24px; }
.toolbar .dim { color: #999; }
.sep {
  width: 1px;
  height: 24px;
  margin: 0 4px 0 3px;
  background: #909090;
}
.toolbar .aa { font: italic bold 18px/24px "Liberation Serif", serif; }
.toolbar .op { font: bold 16px/20px "Liberation Serif", serif; }

.tabs {
  display: flex;
  align-items: flex-start;
  height: 23px;
  padding-left: 2px;
}
.tab {
  display: flex;
  align-items: center;
  gap: 5px;
  width: 82px;
  height: 20px;
  margin-top: 2px;
  padding-left: 4px;
  border: 1px solid #d9d9d9;
}
.tab-active {
  width: 89px;
  height: 22px;
  margin-top: 0;
  padding: 0 0 0 6px;
  gap: 6px;
  background: #fff;
  border-color: #fff;
}
.tab svg { width: 16px; height: 16px; }

/* Document windows */
.workspace { flex: 1; padding: 0 2px 2px; }
.window {
  padding: 0 8px 8px 7px;
  border: 1px solid #333;
  border-radius: 6px 6px 0 0;
  background: #d7e4f2;
  box-shadow: inset 0 0 0 1px #eef4fb;
}
.window-active {
  background: linear-gradient(#99b4d1 0, #b9d1ea 30px);
  border-color: #1a1a1a;
  border-bottom: 0;
  box-shadow: inset 0 1px #e8f1fa, inset -1px -1px #35c6e8;
}
.window-plot { background: linear-gradient(#bfcddb 0, #d7e4f2 30px); }
.window-title {
  display: flex;
  align-items: center;
  height: 30px;
  padding-top: 6px;
}
.window-icon { width: 16px; height: 16px; margin-right: 5px; }
.window h2 { margin: 0; font-size: 12px; font-weight: 400; }
.window-plot h2 { color: #999; }
.window-buttons { display: flex; gap: 2px; margin: 0 0 4px auto; }
.window-buttons button {
  display: flex;
  justify-content: center;
  align-items: center;
  width: 32px;
  height: 18px;
  border: 1px solid #5d7691;
  border-radius: 3px;
  background: linear-gradient(#c5d8ec 0 50%, #9fbad6 50%, #b8d0e8);
  box-shadow: inset 0 0 0 1px #d9e7f4;
}
.window-plot .window-buttons button { background: #d5e1ee; border-color: #8c9bad; }
.window-buttons .close {
  border-color: #4c1020;
  background: linear-gradient(#e2a093 0 50%, #b8432c 50%, #d06a54);
  box-shadow: inset 0 0 0 1px #e3a79c;
}
.window-buttons svg { width: 12px; height: 10px; fill: #fff; stroke: #4b566b; }

.canvas {
  width: 100%;
  height: auto;
  border: solid #808080;
  border-width: 2px 1px 1px 1px;
  border-right-color: #fff;
  border-bottom-color: #fff;
}
.schematic { background: #c0c0c0; }
.wire, .part { fill: none; stroke-width: 1; shape-rendering: crispEdges; }
.wire { stroke: #00f; }
.part { stroke: #000080; }
.dot { fill: #00f; shape-rendering: crispEdges; }
.labels { font: bold 7px "Open Sans", "Noto Sans", sans-serif; fill: #000; }
.labels .big { font-size: 10px; }
.probes { fill: #0000c8; }

.plot { background: #000; }
.grid, .axis, .trace { fill: none; shape-rendering: crispEdges; }
.grid { stroke: #686868; stroke-dasharray: 4 3; }
.axis { stroke: #b0b0b0; }
.trace { stroke: #0f0; }
.ticks { font: bold 13px "Liberation Sans", sans-serif; fill: #b8b8b8; }
.ticks-y { text-anchor: end; }
.ticks-x { text-anchor: middle; }
.trace-name { fill: #0f0; }

.statusbar {
  height: 19px;
  padding-left: 2px;
  border-top: 1px solid #d0d0d0;
}

/* Desktop taskbar */
.taskbar {
  display: flex;
  height: 40px;
  background: linear-gradient(90deg, #d0e7ee, #d1e4ee 60%, #d3dceb);
}
.start {
  display: flex;
  justify-content: center;
  align-items: center;
  width: 48px;
}
.start svg { width: 17px; height: 17px; }
.search {
  display: flex;
  align-items: center;
  width: 344px;
  padding: 0 4px 0 11px;
  border: 1px solid #c4c4c4;
  background: #fff;
}
.search-icon { width: 18px; height: 18px; fill: none; stroke: #222; stroke-width: 1.5; }
.search input {
  flex: 1;
  min-width: 0;
  padding: 0 0 0 10px;
  border: 0;
  font: 14px/20px "Open Sans", "Noto Sans", sans-serif;
}
.search input::placeholder { color: #333; opacity: 1; }
.art { width: 32px; height: 32px; margin-left: 7px; }
.apps { display: flex; }
.apps button {
  display: flex;
  flex-direction: column;
  justify-content: center;
  align-items: center;
  width: 49px;
}
.apps svg { width: 24px; height: 24px; margin: auto 0; }
.apps button::after {
  content: "";
  width: 40px;
  height: 2px;
}
.apps .running::after { background: #0078d7; }
.apps .split::after { background: linear-gradient(90deg, #0078d7 80%, #5ca7e4 80%); }
.apps .current { background: #edf5f8; }
.apps .current::after { width: 48px; }

.tray {
  display: flex;
  align-items: center;
  margin-left: auto;
  padding-right: 4px;
}
.tray button { display: flex; align-items: center; justify-content: center; width: 24px; }
.tray .weather {
  width: auto;
  gap: 8px;
  margin-right: 19px;
  font: 14px/20px "Open Sans", "Noto Sans", sans-serif;
}
.weather svg { width: 24px; height: 22px; }
.glyph { width: 16px; height: 16px; fill: none; stroke: #111; stroke-width: 1.2; }
.tray .clock { flex-direction: column; width: 64px; line-height: 18px; }
.tray .notify { width: 49px; height: 40px; border-right: 1px solid #aebccb; padding-right: 8px; }
```
